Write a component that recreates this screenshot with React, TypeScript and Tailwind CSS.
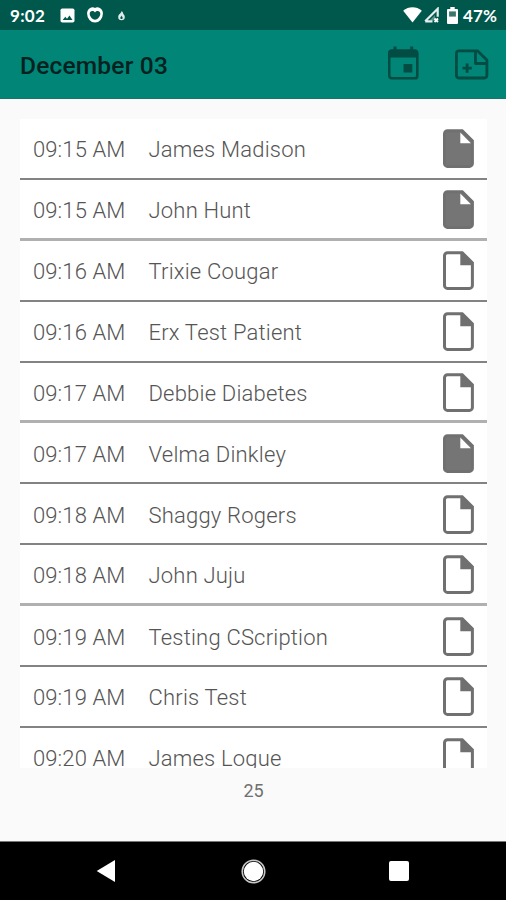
interface Appointment {
  time: string;
  name: string;
  complete?: boolean;
}

const appointments: Appointment[] = [
  { time: "09:15 AM", name: "James Madison", complete: true },
  { time: "09:15 AM", name: "John Hunt", complete: true },
  { time: "09:16 AM", name: "Trixie Cougar" },
  { time: "09:16 AM", name: "Erx Test Patient" },
  { time: "09:17 AM", name: "Debbie Diabetes" },
  { time: "09:17 AM", name: "Velma Dinkley", complete: true },
  { time: "09:18 AM", name: "Shaggy Rogers" },
  { time: "09:18 AM", name: "John Juju" },
  { time: "09:19 AM", name: "Testing CScription" },
  { time: "09:19 AM", name: "Chris Test" },
  { time: "09:20 AM", name: "James Logue" },
];

function StatusBar() {
  return (
    <header className="flex h-[30px] shrink-0 items-center bg-[#00574b] pl-[10px] pr-[9px] font-['Lato','Roboto',sans-serif] text-[17px] font-bold text-white">
      <span className="w-[50px] pt-px tracking-[0.3px]">9:02</span>
      <svg className="h-[15px] w-[15px]" viewBox="0 0 15 15" fill="none">
        <rect x="0.5" y="0.5" width="14" height="14" rx="1.8" fill="#fff" />
        <path d="M2.7 12 5.3 8.7l1.7 2 2.5-3.2 3 4.5Z" fill="#00574b" />
      </svg>
      <svg className="ml-[11px] h-[17px] w-[18px]" viewBox="0 0 18 17" fill="none">
        <path d="M9 1.9C6.5 0 1.8 1.3 1.8 6.5c0 5 3.4 8.3 7.2 8.3s7.2-3.3 7.2-8.3C16.2 1.3 11.5 0 9 1.9Z" fill="#fff" stroke="#fff" strokeWidth="1.4" />
        <path d="M9 5.4C7.4 3.2 3.7 3.4 3.7 6.8c0 3.300 3.300 5.900 5.300 5.900s5.300-2.600 5.300-5.900C14.300 3.400 10.600 3.200 9 5.400Z" fill="#00574b" />
      </svg>
      <svg className="ml-[13px] h-[11px] w-[9px]" viewBox="0 0 9 11" fill="none">
        <path d="M4.5 1C4.8 3 1.2 4 1.2 7a3.3 3.3 0 0 0 6.6 0c0-1.4-.7-2.3-1.5-3C6.2 2.5 5.5 1.5 4.5 1Z" fill="#dcebe8" />
        <path d="M4.4 5.5c0 1-1.1 1.3-1.1 2.4 0 1.5 2.4 1.5 2.4 0 0-1-.8-1.4-1.3-2.4Z" fill="#00574b" />
      </svg>
      <svg className="ml-auto h-[16px] w-[19px]" viewBox="0 0 19 16" fill="#fff">
        <path d="M.2 3.7C5.5-.9 13.5-.9 18.8 3.7L9.5 15.5Z" />
      </svg>
      <svg className="ml-px h-[16px] w-[17px]" viewBox="0 0 17 16" fill="none">
        <path d="M2.2 14.3 14.7 1.8v8M2.2 14.3h7.3" stroke="#e3efed" strokeWidth="2.2" />
        <path d="m6.5 13.5 5.5-5.5v5.5Z" fill="#e3efed" opacity="0.4" />
        <path d="m11.5 11.5 3.500 3.500m0-3.500-3.500 3.500" stroke="#fff" strokeWidth="1.8" />
      </svg>
      <svg className="ml-[7px] h-[17px] w-[11px]" viewBox="0 0 11 17" fill="none">
        <path d="M3.3 0h4.400v2H10q1 0 1 1v13q0 1-1 1H1q-1 0-1-1V3q0-1 1-1h2.300Z" fill="#fff" />
        <path d="M2.1 4.4h6.800v5.200H2.100Z" fill="#39776d" />
      </svg>
      <span className="ml-[5px] pt-px tracking-[0.1px]">47%</span>
    </header>
  );
}

function AppBar() {
  return (
    <div className="flex h-[69px] shrink-0 items-center border-b border-[#1d7568] bg-[#008577] pl-[20px] pr-[17px]">
      <h1 className="pt-[3px] text-[24.5px] font-medium leading-[32px] tracking-[0.2px] text-[#03211e]">December 03</h1>
      <button aria-label="Pick date" className="mb-[3px] ml-auto">
        <svg className="h-[34px] w-[31px]" viewBox="0 0 31 34" fill="none">
          <path d="M3.8 4.5h22.900a2.600 2.600 0 0 1 2.600 2.600v22.600a2.600 2.600 0 0 1-2.600 2.600H3.800a2.600 2.600 0 0 1-2.600-2.600V7.100a2.600 2.600 0 0 1 2.600-2.600Z" stroke="#034c43" strokeWidth="2.6" />
          <path d="M1.5 4.5h27.700v7H1.500ZM5.500.5h3v5h-3ZM22.200.5h3v5h-3ZM15.500 18h8.800v8.500h-8.800Z" fill="#034c43" />
        </svg>
      </button>
      <button aria-label="Add note" className="ml-[36px]">
        <svg className="h-[31px] w-[34px]" viewBox="0 0 34 31" fill="none" stroke="#034c43" strokeWidth="2.8" strokeLinejoin="round">
          <path d="M3.8 1.900h18.900l9.200 9.200v15.500a2.400 2.400 0 0 1-2.400 2.400H3.800a2.400 2.400 0 0 1-2.400-2.400V4.300a2.400 2.400 0 0 1 2.400-2.400Z" />
          <path d="M20.5 2v12.500H32M7.500 19.200h9.300M12.100 14.500v9.300" />
        </svg>
      </button>
    </div>
  );
}

function DocumentIcon({ filled }: { filled?: boolean }) {
  return (
    <svg className="h-[39px] w-[31px] shrink-0" viewBox="0 0 31 39" fill="none">
      <path
        d="M4.500 1.700h14.700l10.200 10.200v22.500a3 3 0 0 1-3 3H4.500a3 3 0 0 1-3-3V4.700a3 3 0 0 1 3-3Z"
        fill={filled ? "#757575" : "#fff"}
        stroke="#707070"
        strokeWidth="3"
      />
      {filled ? (
        <path d="M17.300 3.500v10.700h10.600Z" fill="#fff" />
      ) : (
        <path d="M17.300 1.500h2l10.200 10.400v2.300H17.300Z" fill="#707070" />
      )}
    </svg>
  );
}

function AppointmentRow({ item, soft }: { item: Appointment; soft: boolean }) {
  return (
    <li className="flex h-[60.9px] shrink-0 flex-col">
      <div className="flex min-h-0 flex-1 items-center pl-[13px] pr-[13.5px] pt-px text-[22px] font-light text-[#555]">
        <span className="w-[115.5px] pt-[2px] tracking-[0.1px]">{item.time}</span>
        <span className="flex-1 pt-[2px] tracking-[0.2px]">{item.name}</span>
        <DocumentIcon filled={item.complete} />
      </div>
      <div className={soft ? "h-[3px] bg-[#b0b0b0]" : "h-[2px] bg-[#838383]"} />
    </li>
  );
}

function NavigationBar() {
  return (
    <nav className="flex h-[58px] shrink-0 items-center bg-black px-[96px]">
      <svg className="h-[22px] w-[19px]" viewBox="0 0 19 22" fill="#fff">
        <path d="M.7 11 19 0v22Z" />
      </svg>
      <svg className="ml-[126px] h-[25px] w-[25px]" viewBox="0 0 25 25" fill="none">
        <circle cx="12.5" cy="12.5" r="11.3" stroke="#c9c9c9" strokeWidth="1.5" />
        <circle cx="12.5" cy="12.5" r="9.7" fill="#fff" />
      </svg>
      <div className="ml-auto mr-px h-[20px] w-[20px] rounded-[2px] bg-white" />
    </nav>
  );
}

export default function App() {
  return (
    <div className="flex h-[900px] w-[506px] flex-col overflow-hidden bg-[#fafafa] font-['Roboto',sans-serif]">
      <StatusBar />
      <AppBar />
      <main className="flex min-h-0 flex-1 flex-col border-b border-[#777] pl-[20px] pr-[19px] pt-[20px]">
        <ul className="flex h-[649px] shrink-0 flex-col overflow-hidden bg-white">
          {appointments.map((item, index) => (
            <AppointmentRow key={index} item={item} soft={index % 3 === 1} />
          ))}
        </ul>
        <p className="pt-[11px] text-center text-[18px] leading-[24px] text-[#707070]">25</p>
      </main>
      <NavigationBar />
    </div>
  );
}
